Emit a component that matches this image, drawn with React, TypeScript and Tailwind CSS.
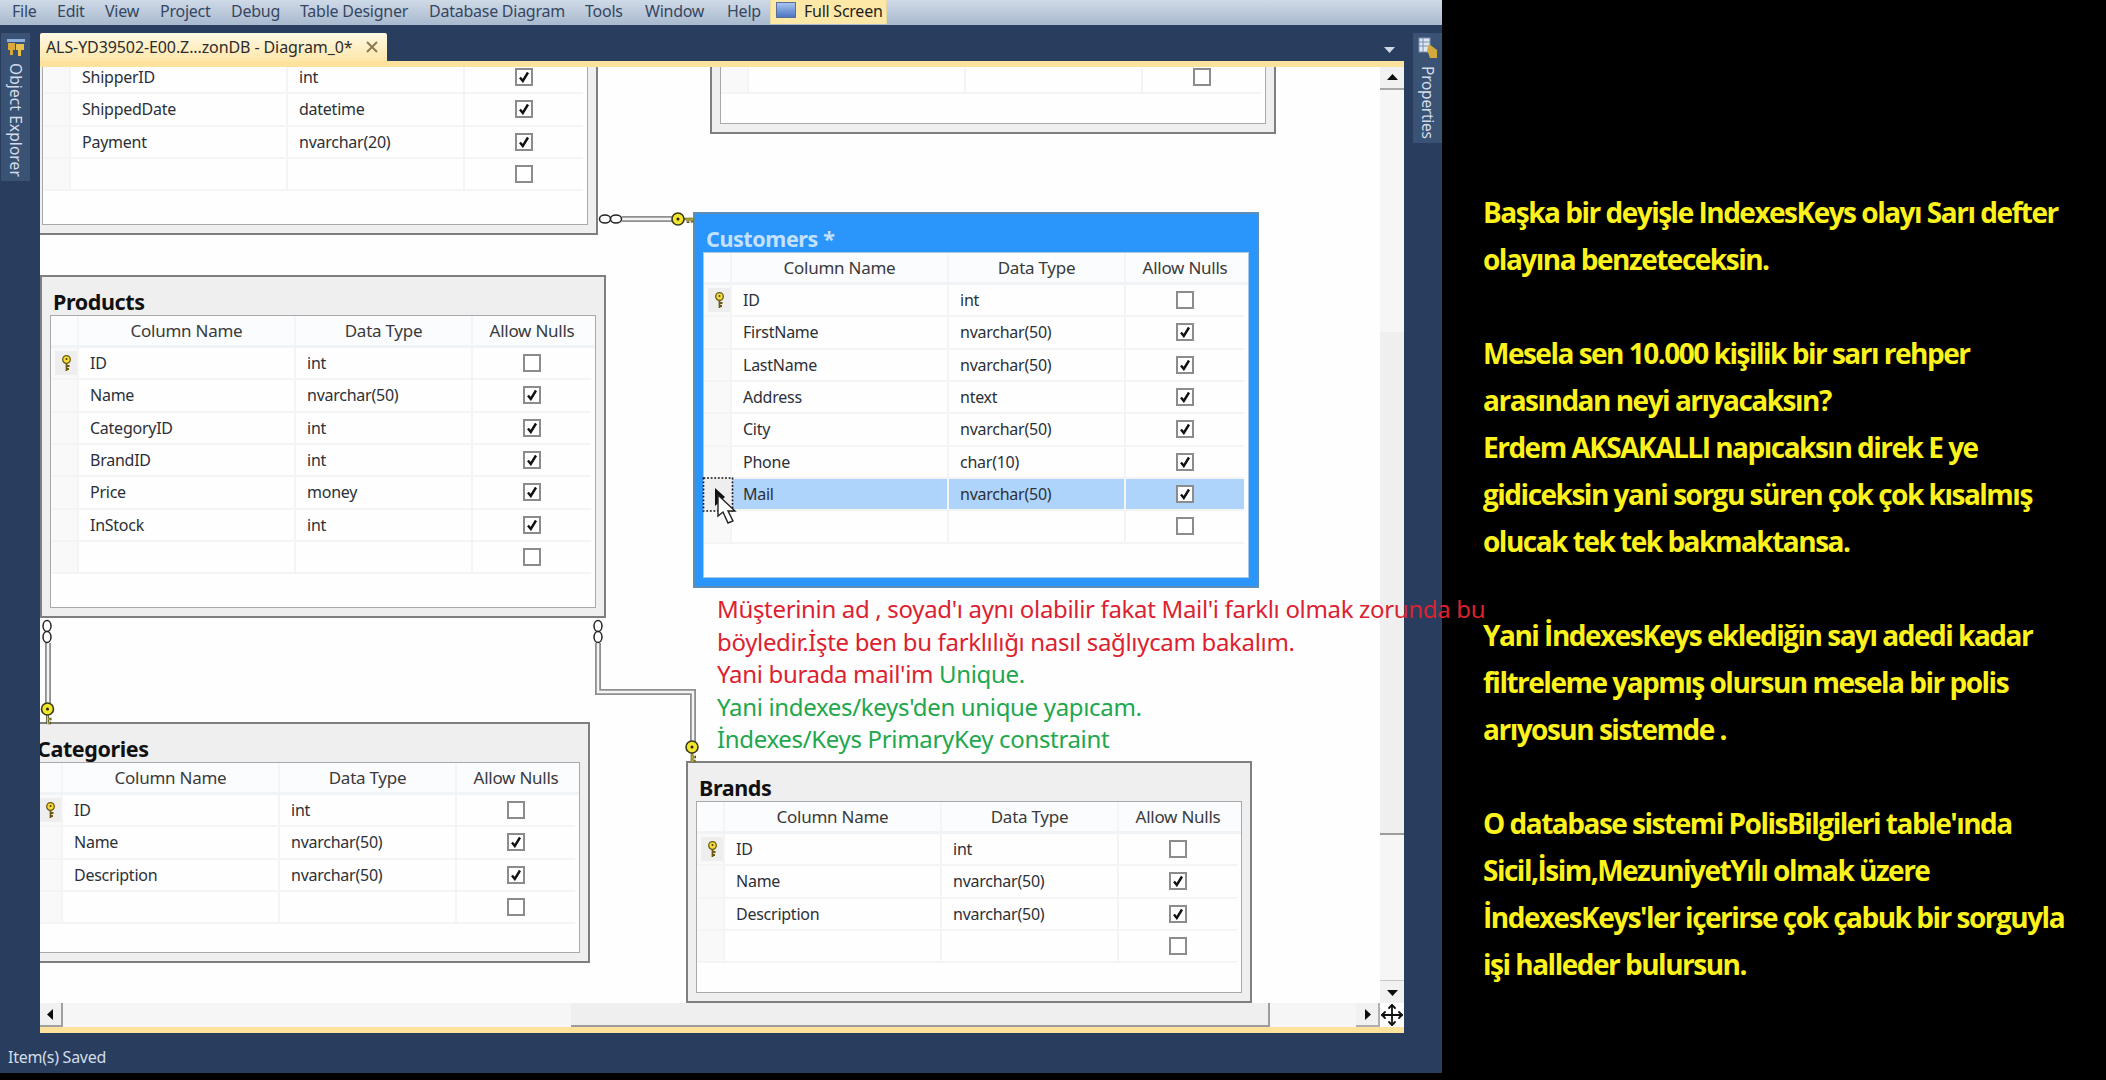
import React from "react";
import { Move } from "lucide-react";

type Row = { name?: string; type?: string; nulls: boolean; pk?: boolean; sel?: boolean };

const e: Row = { nulls: false };
const custRows: Row[] = [
  { name: "ID", type: "int", nulls: false, pk: true },
  { name: "FirstName", type: "nvarchar(50)", nulls: true },
  { name: "LastName", type: "nvarchar(50)", nulls: true },
  { name: "Address", type: "ntext", nulls: true },
  { name: "City", type: "nvarchar(50)", nulls: true },
  { name: "Phone", type: "char(10)", nulls: true },
  { name: "Mail", type: "nvarchar(50)", nulls: true, sel: true },
  e,
];
const prodRows: Row[] = [
  { name: "ID", type: "int", nulls: false, pk: true },
  { name: "Name", type: "nvarchar(50)", nulls: true },
  { name: "CategoryID", type: "int", nulls: true },
  { name: "BrandID", type: "int", nulls: true },
  { name: "Price", type: "money", nulls: true },
  { name: "InStock", type: "int", nulls: true },
  e,
];
const shortRows: Row[] = [
  { name: "ID", type: "int", nulls: false, pk: true },
  { name: "Name", type: "nvarchar(50)", nulls: true },
  { name: "Description", type: "nvarchar(50)", nulls: true },
  e,
];
const orderRows: Row[] = [
  { name: "ShipperID", type: "int", nulls: true },
  { name: "ShippedDate", type: "datetime", nulls: true },
  { name: "Payment", type: "nvarchar(20)", nulls: true },
  e,
];

const GRID = "grid grid-cols-[28px_217px_177px_118px]";

function Check({ on }: { on: boolean }) {
  return (
    <span className="flex h-[18px] w-[18px] items-center justify-center border-2 border-[#8c8c8c] bg-white">
      {on && (
        <svg width="12" height="12" viewBox="0 0 12 12">
          <path d="M2 6.5 L4.8 10 L10 1.5" fill="none" stroke="#111" strokeWidth="2.4" />
        </svg>
      )}
    </span>
  );
}

function SmallKey() {
  return (
    <svg width="11" height="17" viewBox="0 0 11 17">
      <circle cx="5.5" cy="4.5" r="3.8" fill="#f4dc3c" stroke="#6b5a10" strokeWidth="1.3" />
      <circle cx="5.5" cy="4" r="1" fill="#4a3d08" />
      <path d="M5.5 8 V16 M5.5 11 H8.5 M5.5 14 H8" fill="none" stroke="#6b5a10" strokeWidth="1.8" />
    </svg>
  );
}

function Table({
  title,
  rows,
  box,
  active,
  head = true,
  titleH = "h-[38px]",
}: {
  title?: string;
  rows: Row[];
  box: string;
  active?: boolean;
  head?: boolean;
  titleH?: string;
}) {
  return (
    <div
      className={`absolute flex w-[566px] flex-col border-2 px-2 pb-2 ${box} ${
        active ? "border-[#5b8db8] bg-[#2a95fb]" : "border-[#7f7f7f] bg-[#efefef]"
      }`}
    >
      <div className={`flex shrink-0 items-end pl-[3px] ${titleH}`}>
        {title && (
          <span
            className={`font-['Noto_Sans',sans-serif] text-[21.5px] leading-[26px] font-bold tracking-[-0.4px] ${
              active ? "text-[#c4e2ff]" : "text-[#111111]"
            }`}
          >
            {title}
          </span>
        )}
      </div>
      <div className={`flex-1 border ${active ? "border-[#a8c8e8]" : "border-[#a9a9a9]"} bg-[#fdfefd] ${head ? "" : "border-t-0"}`}>
        {head && (
          <div className={`${GRID} h-[32px] border-b-[3px] border-[#f1f4f7] bg-[#fbfcfd] text-center text-[17px] text-[#3a3a3a]`}>
            <div className="border-r-2 border-[#f3f5f8]" />
            <div className="flex items-center justify-center border-r-2 border-[#f3f5f8]">Column Name</div>
            <div className="flex items-center justify-center border-r-2 border-[#f3f5f8]">Data Type</div>
            <div className="flex items-center justify-center">Allow Nulls</div>
          </div>
        )}
        {rows.map((r, i) => (
          <div key={i} className={`${GRID} h-[32.33px] text-[#2c3038]`}>
            <div className="flex items-center justify-center border-r-2 border-b-2 border-[#f4f4f4] bg-[#f9f9f9] py-[3px] pl-1">
              {r.pk && (
                <span className="flex h-full w-full items-center justify-center bg-[#eeeeee]">
                  <SmallKey />
                </span>
              )}
            </div>
            <div className={`flex items-center border-r-2 border-b-2 border-[#f4f4f4] pl-[11px] ${r.sel ? "bg-[#aed4fb]" : ""}`}>{r.name}</div>
            <div className={`flex items-center border-r-2 border-b-2 border-[#f4f4f4] pl-[11px] ${r.sel ? "bg-[#aed4fb]" : ""}`}>{r.type}</div>
            <div className={`flex items-center justify-center border-b-2 border-[#f4f4f4] ${r.sel ? "bg-[#aed4fb]" : ""}`}>
              <Check on={r.nulls} />
            </div>
          </div>
        ))}
      </div>
    </div>
  );
}

function BigKey({ x, y, horizontal }: { x: number; y: number; horizontal?: boolean }) {
  return (
    <g transform={`translate(${x} ${y})${horizontal ? " rotate(-90) scale(-1 1)" : ""}`}>
      <path d="M0 6 V15 M0 10 H4 M0 14 H3.5" fill="none" stroke="#4a4a20" strokeWidth="2.6" />
      <path d="M0 6 V15 M0 10 H3 M0 14 H2.5" fill="none" stroke="#e6cf3a" strokeWidth="1" />
      <circle r="6" fill="#f2e52c" stroke="#3a3a18" strokeWidth="1.6" />
      <circle r="1.5" fill="#222" />
    </g>
  );
}

function Tube({ d }: { d: string }) {
  return (
    <>
      <path d={d} fill="none" stroke="#8f8f8f" strokeWidth="6" />
      <path d={d} fill="none" stroke="#f4f4f4" strokeWidth="2.4" />
    </>
  );
}

function Rings({ x, y, horizontal }: { x: number; y: number; horizontal?: boolean }) {
  const a = horizontal ? [x + 5, y] : [x, y + 5];
  const b = horizontal ? [x + 16, y] : [x, y + 16];
  return (
    <g fill="#fff" stroke="#222" strokeWidth="1.5">
      <ellipse cx={a[0]} cy={a[1]} rx={horizontal ? 5.5 : 4} ry={horizontal ? 4 : 5.5} />
      <ellipse cx={b[0]} cy={b[1]} rx={horizontal ? 5.5 : 4} ry={horizontal ? 4 : 5.5} />
    </g>
  );
}

function Overlay() {
  return (
    <svg className="pointer-events-none absolute inset-0 h-full w-full" viewBox="40 67 1340 936">
      <Tube d="M622 219 H672" />
      <Rings x={600} y={219} horizontal />
      <BigKey x={678} y={219} horizontal />
      <Tube d="M48 643 V703" />
      <Rings x={47} y={621} />
      <BigKey x={47.5} y={709} />
      <Tube d="M598 643 V692 H693 V742" />
      <Rings x={598} y={621} />
      <BigKey x={692} y={747} />
      <rect x="703.5" y="478" width="29" height="33" fill="#eeeeee" stroke="#111" strokeWidth="1.6" strokeDasharray="1.8 1.8" />
      <path d="M715 488 L725 497 L715 506 Z" fill="#111" />
      <path d="M718 495 L718 516 L723 512 L728 523 L733 521 L728 511 L735 511 Z" fill="#fff" stroke="#222" strokeWidth="1.4" />
    </svg>
  );
}

function Tri({ dir }: { dir: "up" | "down" | "left" | "right" }) {
  const p = { up: "M0 8 L5.5 2 L11 8 Z", down: "M0 3 L5.5 9 L11 3 Z", left: "M8 0 L2 5.5 L8 11 Z", right: "M3 0 L9 5.5 L3 11 Z" }[dir];
  return (
    <svg width="11" height="11" viewBox="0 0 11 11">
      <path d={p} fill="#0c0c0c" />
    </svg>
  );
}

const menu = [
  ["File", "w-[45px]"],
  ["Edit", "w-[48px]"],
  ["View", "w-[55px]"],
  ["Project", "w-[71px]"],
  ["Debug", "w-[69px]"],
  ["Table Designer", "w-[129px]"],
  ["Database Diagram", "w-[156px]"],
  ["Tools", "w-[60px]"],
  ["Window", "w-[82px]"],
  ["Help", "w-[43px]"],
];

const railText = "font-['Noto_Sans',sans-serif] text-[15.5px] leading-[20px] text-[#d3dce9] [writing-mode:vertical-rl]";

const yellow = [
  "Başka bir deyişle IndexesKeys olayı Sarı defter",
  "olayına benzeteceksin.",
  "",
  "Mesela sen 10.000 kişilik bir sarı rehper",
  "arasından neyi arıyacaksın?",
  "Erdem AKSAKALLI napıcaksın direk E ye",
  "gidiceksin yani sorgu süren çok çok kısalmış",
  "olucak tek tek bakmaktansa.",
  "",
  "Yani İndexesKeys eklediğin sayı adedi kadar",
  "filtreleme yapmış olursun mesela bir polis",
  "arıyosun sistemde .",
  "",
  "O database sistemi PolisBilgileri table'ında",
  "Sicil,İsim,MezuniyetYılı olmak üzere",
  "İndexesKeys'ler içerirse çok çabuk bir sorguyla",
  "işi halleder bulursun.",
];

export default function App() {
  return (
    <div className="relative flex h-[1080px] w-[2106px] overflow-hidden bg-black font-['Noto_Sans',sans-serif] text-[16px] leading-[22px] tracking-[-0.25px]">
      <div className="flex h-[1073px] w-[1442px] shrink-0 flex-col bg-[#293e5e]">
        {/* menu */}
        <div className="flex h-[25px] shrink-0 items-start bg-gradient-to-b from-[#cfdae8] to-[#a9b9ce] pl-3 text-[16px] text-[#36465f]">
          {menu.map(([m, w]) => (
            <span key={m} className={`${w} leading-[22px]`}>
              {m}
            </span>
          ))}
          <div className="flex h-[24px] w-[117px] items-start gap-[8px] border-x border-[#e8d9a0] bg-[#fde8a8] pl-[5px] text-[#1f1f1f]">
            <span className="mt-[2px] block h-[16px] w-[20px] border border-[#5a6f96] bg-gradient-to-b from-[#a9c4ee] to-[#4d76c4]" />
            <span className="leading-[22px]">Full Screen</span>
          </div>
        </div>

        <div className="flex min-h-0 flex-1">
          {/* left rail */}
          <div className="w-[40px] shrink-0 pt-[8px] pl-px">
            <div className="flex h-[148px] w-[29px] flex-col items-center gap-[5px] bg-[#3a5274] pt-[3px]">
              <svg width="22" height="22" viewBox="0 0 22 22">
                <path d="M2 3 H20 V6 H2 Z" fill="#8fb0dc" />
                <path d="M3 7 H10 V14 H8 V19 H5 V14 H3 Z" fill="#d8a93a" />
                <path d="M11 8 H19 V14 H16 V20 H13 V14 H11 Z" fill="#e6bf4e" />
              </svg>
              <span className={`${railText} tracking-[0.1px]`}>Object Explorer</span>
            </div>
          </div>

          {/* document */}
          <div className="flex w-[1364px] shrink-0 flex-col">
            <div className="flex h-[36px] shrink-0 items-end justify-between pr-[9px]">
              <div className="flex h-[28px] w-[347px] items-center justify-between rounded-t-[2px] bg-gradient-to-b from-[#fff9e3] to-[#fde6a9] pr-[8px] pl-[6px] text-[16px] tracking-[-0.1px] text-[#2c2c2c]">
                <span>ALS-YD39502-E00.Z...zonDB - Diagram_0*</span>
                <svg width="14" height="14" viewBox="0 0 14 14">
                  <path d="M2 2 L12 12 M12 2 L2 12" stroke="#8a7a52" strokeWidth="2" />
                </svg>
              </div>
              <svg className="mb-[7px]" width="11" height="7" viewBox="0 0 11 7">
                <path d="M0 0 H11 L5.5 6 Z" fill="#cfd8e4" />
              </svg>
            </div>
            <div className="h-[6px] shrink-0 bg-[#fde29e]" />

            <div className="flex min-h-0 flex-1">
              <div className="relative min-w-0 flex-1 overflow-hidden bg-[#fdfefd]">
                <Table rows={orderRows} head={false} titleH="h-[20px]" box="-left-[8px] -top-[27px] h-[195px]" />
                <Table rows={[e]} head={false} titleH="h-[20px]" box="left-[670px] -top-[27px] h-[94px]" />
                <Table title="Customers *" rows={custRows} active box="left-[653px] top-[145px] h-[376px]" />
                <Table title="Products" rows={prodRows} box="left-0 top-[208px] h-[343px]" />
                <Table title="Categories" rows={shortRows} box="-left-[16px] top-[655px] h-[241px]" />
                <Table title="Brands" rows={shortRows} box="left-[646px] top-[694px] h-[242px]" />
                <Overlay />
              </div>
              {/* vertical scrollbar */}
              <div className="flex w-[24px] shrink-0 flex-col bg-[#f6f6f6]">
                <div className="flex h-[23px] items-center justify-center border-b-2 border-[#a8a8a8] bg-[#f1f1f1]">
                  <Tri dir="up" />
                </div>
                <div className="h-[242px]" />
                <div className="h-[503px] border-b-2 border-[#9c9c9c] bg-[#efefef]" />
                <div className="flex-1" />
                <div className="flex h-[23px] items-center justify-center border-t border-[#c8c8c8] bg-[#f1f1f1]">
                  <Tri dir="down" />
                </div>
              </div>
            </div>

            {/* horizontal scrollbar */}
            <div className="flex h-[24px] shrink-0 bg-[#f6f6f6]">
              <div className="flex w-[23px] items-center justify-center border-r-2 border-b-2 border-[#a0a0a0] bg-[#f1f1f1]">
                <Tri dir="left" />
              </div>
              <div className="w-[508px]" />
              <div className="w-[699px] border-r-2 border-b-2 border-[#9c9c9c] bg-[#efefef]" />
              <div className="flex-1" />
              <div className="flex w-[24px] items-center justify-center border-r-2 border-b-2 border-[#b0b0b0] bg-[#f1f1f1]">
                <Tri dir="right" />
              </div>
              <div className="flex w-[24px] items-center justify-center bg-white">
                <Move size={24} strokeWidth={1.8} color="#111" />
              </div>
            </div>
            <div className="h-[6px] shrink-0 bg-[#fde29e]" />
          </div>

          {/* right rail */}
          <div className="flex-1 pt-[8px] pl-[9px]">
            <div className="flex h-[110px] w-[29px] flex-col items-center gap-[6px] bg-[#3a5274] pt-[3px]">
              <svg width="22" height="24" viewBox="0 0 22 24">
                <rect x="2" y="2" width="11" height="14" fill="#dfe7f3" stroke="#7c90ad" />
                <path d="M2 6 H13 M2 10 H13 M6 2 V16" stroke="#7c90ad" />
                <path d="M12 8 L20 14 V22 H13 L10 14 Z" fill="#d2a93c" />
              </svg>
              <span className={railText}>Properties</span>
            </div>
          </div>
        </div>

        {/* status */}
        <div className="h-[40px] shrink-0 pt-[13px] pl-[8px] text-[16px] text-[#d3dce9]">Item(s) Saved</div>
      </div>

      {/* yellow notes */}
      <div className="pt-[189px] pl-[41px] font-['Open_Sans',sans-serif] text-[28px] leading-[47px] font-bold tracking-[-1.5px] whitespace-nowrap text-[#fdf21c]">
        {yellow.map((l, i) => (
          <div key={i} className="h-[47px]">
            {l}
          </div>
        ))}
      </div>

      {/* annotation laid over the diagram */}
      <div className="absolute top-[593px] left-[717px] text-[24px] leading-[32.6px] tracking-[-0.33px] whitespace-nowrap text-[#dc2230]">
        <div>Müşterinin ad , soyad'ı aynı olabilir fakat Mail'i farklı olmak zorunda bu</div>
        <div>böyledir.İşte ben bu farklılığı nasıl sağlıycam bakalım.</div>
        <div>
          Yani burada mail'im <span className="text-[#22a74d]">Unique.</span>
        </div>
        <div className="text-[#22a74d]">Yani indexes/keys'den unique yapıcam.</div>
        <div className="text-[#22a74d]">İndexes/Keys PrimaryKey constraint</div>
      </div>
    </div>
  );
}
